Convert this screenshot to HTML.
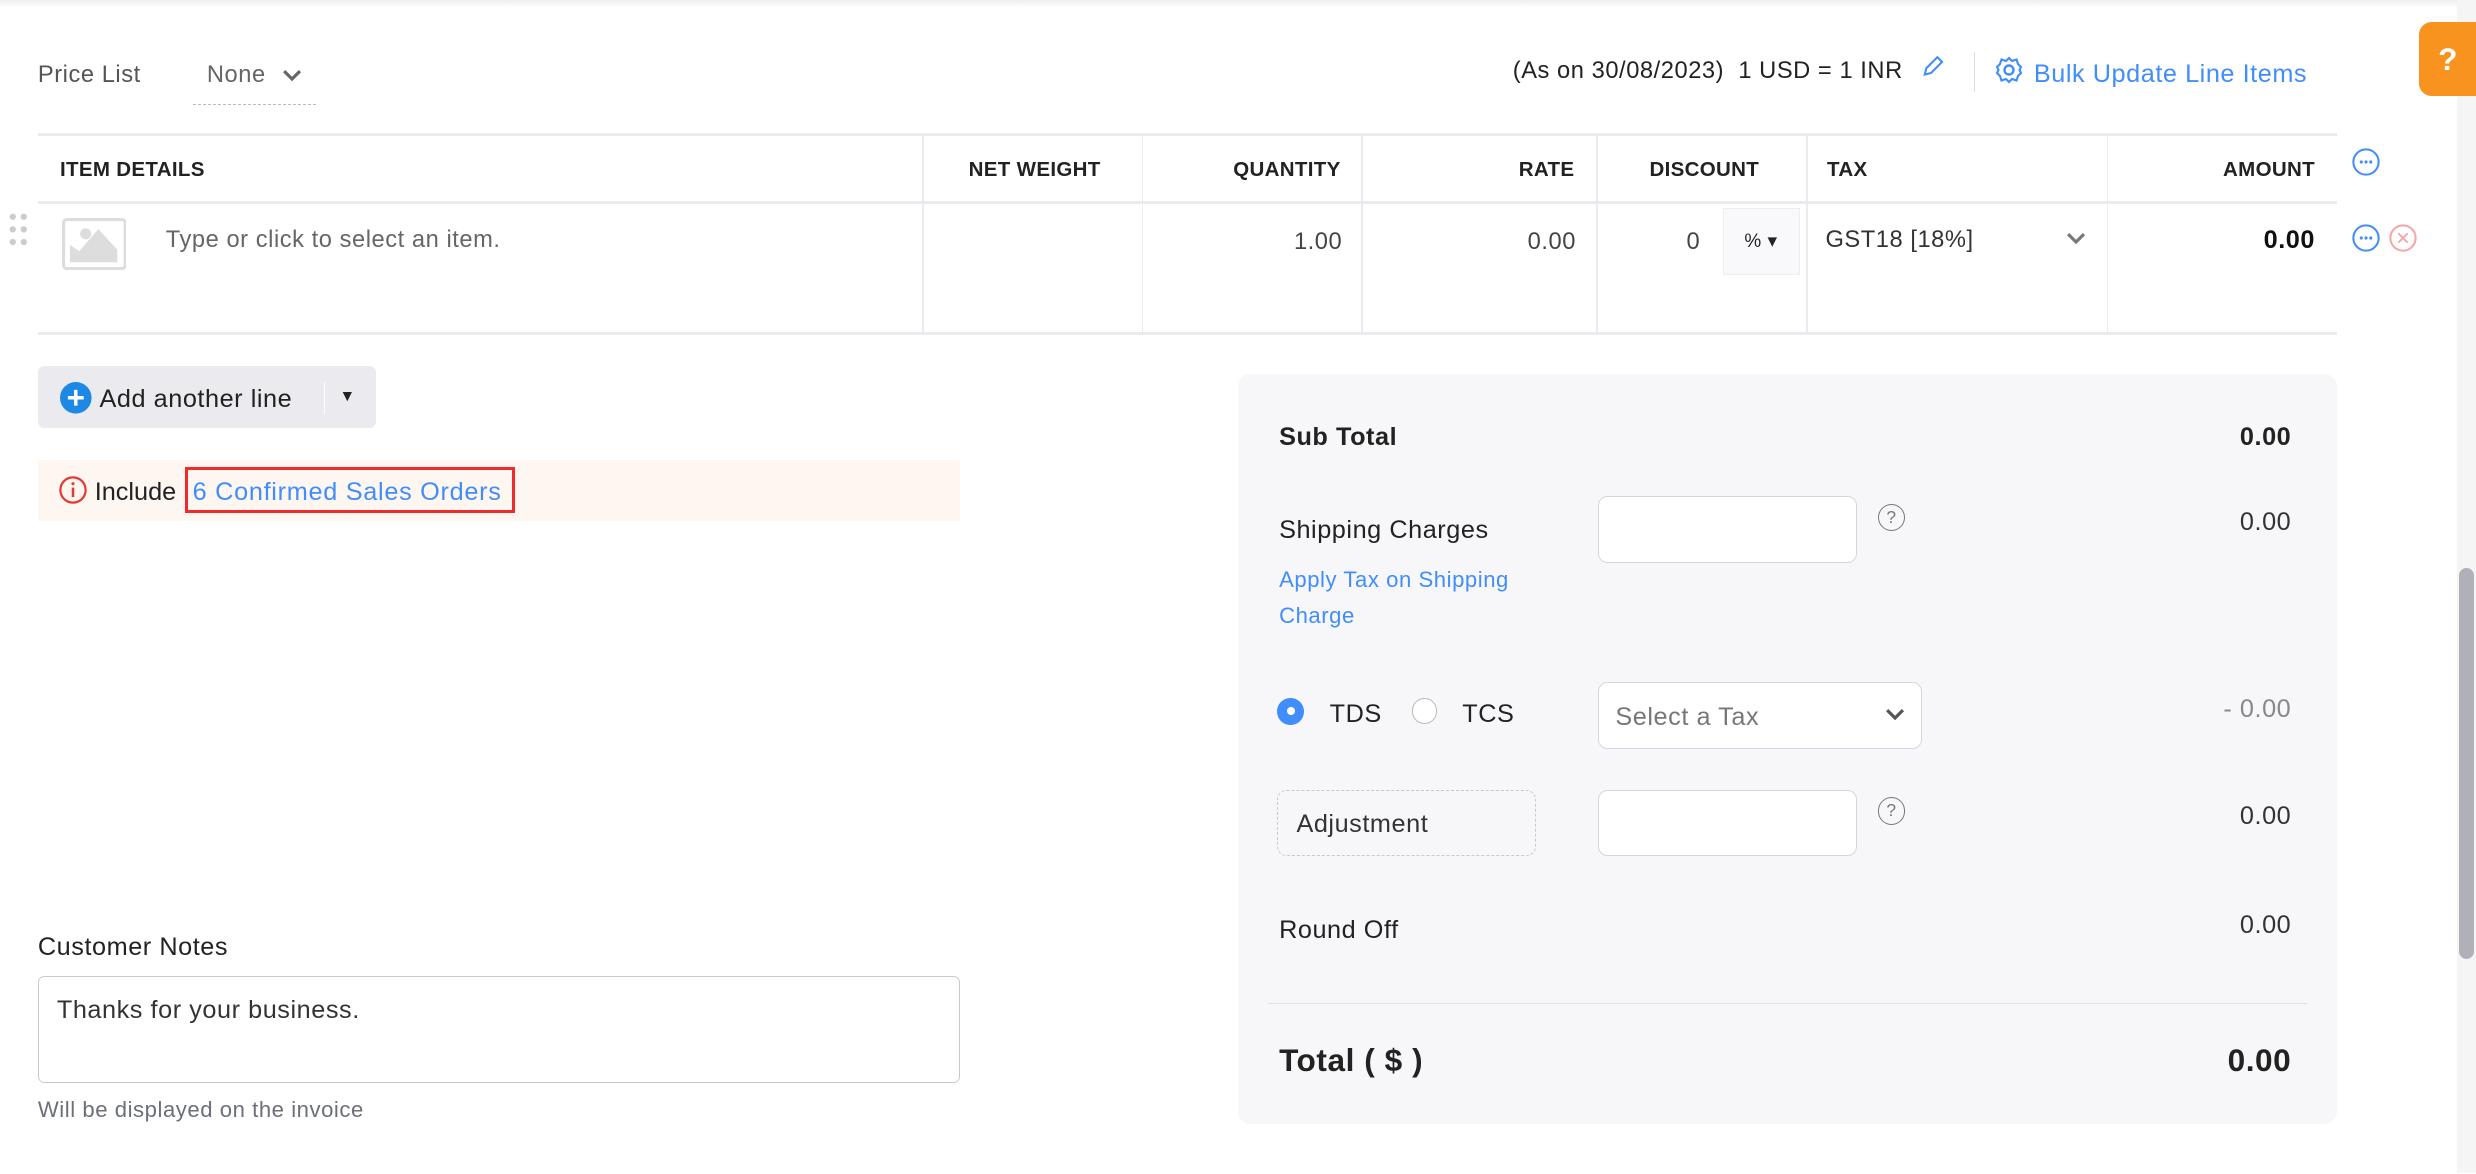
<!DOCTYPE html>
<html><head><meta charset="utf-8"><style>
html,body{margin:0;padding:0;background:#fff;overflow:hidden;width:2476px;height:1174px}
#w{position:relative;width:1568px;height:743px;zoom:1.5791;font-family:"Liberation Sans",sans-serif;color:#212529;font-size:15px;letter-spacing:0.35px}
.a{position:absolute;white-space:nowrap}
.h{font-weight:bold;font-size:13px;color:#222;top:100px;letter-spacing:0.2px}
.vl{position:absolute;top:86px;height:125px;width:1px;background:#ebebef}
.inp{position:absolute;background:#fff;border:1px solid #d5d5e0;border-radius:6px}
.q{position:absolute;width:16px;height:16px;border:1px solid #777;border-radius:50%;font-size:11px;text-align:center;line-height:16px;color:#777;letter-spacing:0}
.r{right:117px;text-align:right}
</style></head><body><div id="w">
<div class="a" style="left:0;top:0;width:1568px;height:5px;background:linear-gradient(#eee,#fff)"></div>
<div class="a" style="left:24px;top:39px;color:#555">Price List</div>
<div class="a" style="left:131px;top:39px;color:#666">None</div>
<svg class="a" style="left:178px;top:43px" width="14" height="10"><path d="M2 2l5 5 5-5" stroke="#666" stroke-width="2" fill="none"/></svg>
<div class="a" style="left:122px;top:66px;width:78px;border-top:1px dashed #b8bcc8"></div>
<div class="a" style="left:958px;top:37px;color:#222">(As on 30/08/2023)&nbsp; 1 USD = 1 INR</div>
<svg class="a" style="left:1216px;top:34px" width="16" height="16"><path d="M3 13l1-4 7-7 3 3-7 7z" stroke="#408dfb" stroke-width="1.3" fill="none"/></svg>
<div class="a" style="left:1250px;top:33px;width:1px;height:25px;background:#ddd"></div>
<svg class="a" style="left:1263px;top:35px" width="19" height="19" viewBox="0 0 20 20"><circle cx="10" cy="10" r="3" stroke="#408dfb" stroke-width="1.6" fill="none"/><path d="M10 2l2 2 3-1 1 3 2 2-1 2 1 2-2 2-1 3-3-1-2 2-2-2-3 1-1-3-2-2 1-2-1-2 2-2 1-3 3 1z" stroke="#408dfb" stroke-width="1.4" fill="none"/></svg>
<div class="a" style="left:1288px;top:38px;color:#408dfb;font-size:16px">Bulk Update Line Items</div>
<div class="a" style="left:1556px;top:0;width:12px;height:743px;background:#f5f5f5"></div>
<div class="a" style="left:1557px;top:360px;width:10px;height:247px;background:#b0b0b8;border-radius:5px"></div>
<div class="a" style="left:1532px;top:14px;width:40px;height:47px;background:#f7931e;border-radius:8px 0 0 8px;color:#fff;font-weight:bold;font-size:20px;line-height:47px;padding-left:12px;box-sizing:border-box">?</div>
<!-- table -->
<div class="a" style="left:24px;top:84px;width:1456px;height:2px;background:#ebebef"></div>
<div class="a" style="left:24px;top:127px;width:1456px;height:2px;background:#ebebef"></div>
<div class="a" style="left:24px;top:210px;width:1456px;height:2px;background:#ebebef"></div>
<div class="vl" style="left:584px"></div><div class="vl" style="left:723px"></div><div class="vl" style="left:862px"></div><div class="vl" style="left:1011px"></div><div class="vl" style="left:1144px"></div><div class="vl" style="left:1334px"></div>
<div class="a h" style="left:38px">ITEM DETAILS</div>
<div class="a h" style="right:871px">NET WEIGHT</div>
<div class="a h" style="right:719px">QUANTITY</div>
<div class="a h" style="right:571px">RATE</div>
<div class="a h" style="right:454px">DISCOUNT</div>
<div class="a h" style="left:1157px">TAX</div>
<div class="a h" style="right:102px">AMOUNT</div>
<svg class="a" style="left:5px;top:134px" width="14" height="22"><g fill="#ccc"><circle cx="3" cy="3" r="2"/><circle cx="10" cy="3" r="2"/><circle cx="3" cy="11" r="2"/><circle cx="10" cy="11" r="2"/><circle cx="3" cy="19" r="2"/><circle cx="10" cy="19" r="2"/></g></svg>
<svg class="a" style="left:39px;top:138px" width="41" height="33"><rect x="1" y="1" width="39" height="31" rx="2" fill="#fff" stroke="#ddd" stroke-width="2"/><path d="M5 28V17l6 4 12-14 12 13v8z" fill="#ddd"/><circle cx="15" cy="10" r="3.5" fill="#ddd"/></svg>
<div class="a" style="left:105px;top:144px;color:#666">Type or click to select an item.</div>
<div class="a" style="right:718px;top:145px;color:#444">1.00</div>
<div class="a" style="right:570px;top:145px;color:#444">0.00</div>
<div class="a" style="left:1068px;top:145px;color:#444">0</div>
<div class="a" style="left:1091px;top:132px;width:49px;height:42px;background:#f9f9fb;border:1px solid #eee;box-sizing:border-box;font-size:12px;line-height:42px;padding-left:13px">% ▾</div>
<div class="a" style="left:1156px;top:144px;color:#333">GST18 [18%]</div>
<svg class="a" style="left:1308px;top:146px" width="14" height="10"><path d="M2 2l5 5 5-5" stroke="#777" stroke-width="2" fill="none"/></svg>
<div class="a" style="right:102px;top:143px;font-weight:bold;font-size:16px;color:#111">0.00</div>
<svg class="a" style="left:1489px;top:93px" width="19" height="19"><circle cx="9.5" cy="9.5" r="8" stroke="#408dfb" stroke-width="1.3" fill="none"/><g fill="#408dfb"><circle cx="6.5" cy="9.5" r="1"/><circle cx="9.5" cy="9.5" r="1"/><circle cx="12.5" cy="9.5" r="1"/></g></svg>
<svg class="a" style="left:1489px;top:141px" width="19" height="19"><circle cx="9.5" cy="9.5" r="8" stroke="#408dfb" stroke-width="1.3" fill="none"/><g fill="#408dfb"><circle cx="6.5" cy="9.5" r="1"/><circle cx="9.5" cy="9.5" r="1"/><circle cx="12.5" cy="9.5" r="1"/></g></svg>
<svg class="a" style="left:1512px;top:141px" width="19" height="19"><circle cx="9.5" cy="9.5" r="8" stroke="#f4a6a6" stroke-width="1.3" fill="none"/><path d="M6.5 6.5l6 6M12.5 6.5l-6 6" stroke="#f4a6a6" stroke-width="1.2"/></svg>
<!-- add line -->
<div class="a" style="left:24px;top:232px;width:214px;height:39px;background:#ebebef;border-radius:4px"></div>
<svg class="a" style="left:38px;top:242px" width="20" height="20"><circle cx="10" cy="10" r="10" fill="#1e88e5"/><path d="M10 5v10M5 10h10" stroke="#fff" stroke-width="2.2"/></svg>
<div class="a" style="left:63px;top:244px;font-size:16px;color:#222">Add another line</div>
<div class="a" style="left:205px;top:242px;width:1px;height:20px;background:#fff"></div>
<div class="a" style="left:215px;top:246px;font-size:10px;color:#222">▼</div>
<div class="a" style="left:24px;top:291px;width:584px;height:39px;background:#fdf6f1"></div>
<svg class="a" style="left:37px;top:301px" width="19" height="19"><circle cx="9.5" cy="9.5" r="8" stroke="#e53935" stroke-width="1.4" fill="none"/><path d="M9.5 8v6" stroke="#e53935" stroke-width="1.6"/><circle cx="9.5" cy="5.5" r="1" fill="#e53935"/></svg>
<div class="a" style="left:60px;top:303px;font-size:16px;color:#222;letter-spacing:0">Include</div>
<div class="a" style="left:117px;top:296px;width:209px;height:29px;border:2px solid #ee2a2a;box-sizing:border-box"></div>
<div class="a" style="left:122px;top:303px;font-size:16px;color:#408dfb;letter-spacing:0.45px">6 Confirmed Sales Orders</div>
<div class="a" style="left:24px;top:591px;color:#222;font-size:16px">Customer Notes</div>
<div class="a" style="left:24px;top:618px;width:584px;height:68px;border:1px solid #c8c8d0;border-radius:4px;box-sizing:border-box"></div>
<div class="a" style="left:36px;top:631px;color:#333;font-size:16px">Thanks for your business.</div>
<div class="a" style="left:24px;top:695px;color:#6c6f7a;font-size:14px">Will be displayed on the invoice</div>
<!-- totals -->
<div class="a" style="left:784px;top:237px;width:696px;height:475px;background:#f7f7f9;border-radius:8px"></div>
<div class="a" style="left:810px;top:268px;font-weight:bold;font-size:16px;color:#222">Sub Total</div>
<div class="a r" style="top:268px;font-weight:bold;font-size:16px;color:#222">0.00</div>
<div class="a" style="left:810px;top:327px;font-size:16px;color:#222">Shipping Charges</div>
<div class="inp" style="left:1012px;top:314px;width:163px;height:41px"></div>
<div class="q" style="left:1189px;top:319px">?</div>
<div class="a r" style="top:322px;color:#333;font-size:16px">0.00</div>
<div class="a" style="left:810px;top:356px;font-size:14px;color:#408dfb;line-height:23px">Apply Tax on Shipping<br>Charge</div>
<div class="a" style="left:809px;top:442px;width:17px;height:17px;border-radius:50%;background:#408dfb"></div>
<div class="a" style="left:815px;top:448px;width:5px;height:5px;border-radius:50%;background:#fff"></div>
<div class="a" style="left:842px;top:443px;font-size:16px;color:#222">TDS</div>
<div class="a" style="left:894px;top:442px;width:15px;height:15px;border-radius:50%;border:1px solid #bbb;background:#fff"></div>
<div class="a" style="left:926px;top:443px;font-size:16px;color:#222">TCS</div>
<div class="inp" style="left:1012px;top:432px;width:204px;height:41px"></div>
<div class="a" style="left:1023px;top:445px;font-size:16px;color:#777">Select a Tax</div>
<svg class="a" style="left:1193px;top:448px" width="14" height="10"><path d="M2 2l5 5 5-5" stroke="#555" stroke-width="2" fill="none"/></svg>
<div class="a r" style="top:440px;color:#888;font-size:16px">- 0.00</div>
<div class="a" style="left:809px;top:500px;width:164px;height:42px;border:1px dashed #c8c8d0;border-radius:6px;box-sizing:border-box"></div>
<div class="a" style="left:821px;top:513px;font-size:16px;color:#333">Adjustment</div>
<div class="inp" style="left:1012px;top:500px;width:163px;height:41px"></div>
<div class="q" style="left:1189px;top:505px">?</div>
<div class="a r" style="top:508px;color:#333;font-size:16px">0.00</div>
<div class="a" style="left:810px;top:580px;font-size:16px;color:#222">Round Off</div>
<div class="a r" style="top:577px;color:#333;font-size:16px">0.00</div>
<div class="a" style="left:803px;top:635px;width:658px;height:1px;background:#e0e0e6"></div>
<div class="a" style="left:810px;top:660px;font-weight:bold;font-size:20px;color:#222">Total ( $ )</div>
<div class="a r" style="top:660px;font-weight:bold;font-size:20px;color:#222">0.00</div>
</div></body></html>
